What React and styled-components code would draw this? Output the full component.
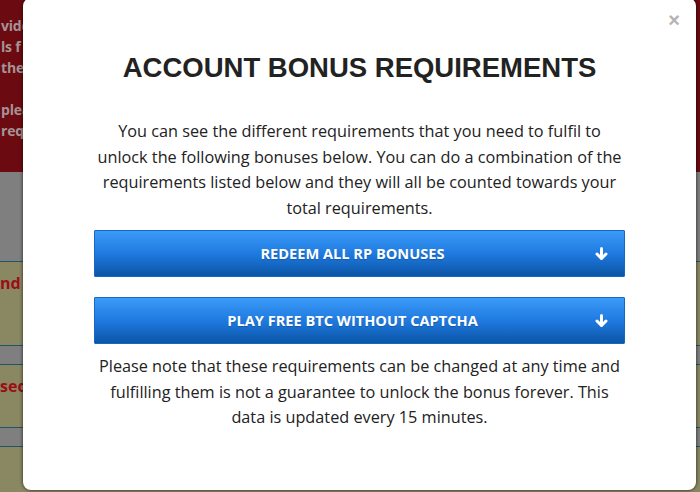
import React from "react";
import styled, { createGlobalStyle } from "styled-components";

const Global = createGlobalStyle`
  html, body { margin: 0; padding: 0; }
  body { width: 700px; height: 492px; overflow: hidden; background: #7f7f7f; font-family: "Open Sans", sans-serif; }
`;

const Page = styled.div`
  position: relative;
  width: 700px;
  height: 492px;
  overflow: hidden;
  display: flex;
  flex-direction: column;
`;

const Notice = styled.div`
  flex: 0 0 172px;
  background: #6b0a10;
  padding-top: 15px;
  box-sizing: border-box;
  display: flex;
  flex-direction: column;
  font-weight: 700;
  font-size: 14px;
  line-height: 21px;
  letter-spacing: -0.2px;
  color: #a69395;
`;

const NoticeLine = styled.div`
  height: 21px;
  padding-left: 1px;
  white-space: nowrap;
`;

const Spacer = styled.div`
  flex: 0 0 ${(p) => p.$h}px;
  box-sizing: border-box;
  background: #7f7f7f;
  border-bottom: 1px solid #1f5566;
`;

const Row = styled.div`
  flex: 0 0 ${(p) => p.$h}px;
  background: #8a8862;
  border-bottom: 1px solid #1f5566;
  box-sizing: border-box;
  padding-top: 10px;
  font-weight: 700;
  font-size: 16px;
  line-height: 22px;
  color: #9c0d16;
  white-space: nowrap;
`;

const Modal = styled.div`
  position: absolute;
  left: 23px;
  top: -2px;
  width: 673px;
  height: 492px;
  background: #ffffff;
  border-radius: 8px;
  box-shadow: 0 0 3px 1px rgba(0, 0, 0, 0.45);
  box-sizing: border-box;
  padding: 0 71px;
  display: flex;
  flex-direction: column;
  align-items: stretch;
  color: #222;
`;

const Close = styled.div`
  position: absolute;
  right: 16px;
  top: 12px;
  font-family: "Liberation Sans", Arial, sans-serif;
  font-weight: 700;
  font-size: 20px;
  line-height: 20px;
  color: #b3b3b3;
`;

const Title = styled.h1`
  margin: 54px -20px 0;
  text-align: center;
  font-family: "Liberation Sans", Arial, sans-serif;
  font-weight: 700;
  font-size: 27.5px;
  line-height: 31px;
  color: #222;
  white-space: nowrap;
`;

const Para = styled.p`
  margin: ${(p) => p.$mt}px 0 0;
  text-align: center;
  font-family: "Open Sans", sans-serif;
  font-size: 16.25px;
  line-height: 25.7px;
  color: #222;
`;

const Button = styled.button`
  position: relative;
  margin-top: ${(p) => p.$mt}px;
  height: 47px;
  width: 100%;
  border: 1px solid #1568c7;
  border-radius: 1px;
  background: linear-gradient(to bottom, #3b9bf8 0%, #1f7ae0 50%, #0b55a6 100%);
  color: #fff;
  font-family: "Open Sans", sans-serif;
  font-weight: 700;
  font-size: 14.6px;
  padding: 0 14px 0 0;
  display: flex;
  align-items: center;
  justify-content: center;
  cursor: pointer;
  text-shadow: 0 1px 1px rgba(0, 0, 0, 0.2);
`;

const Arrow = styled.svg`
  position: absolute;
  right: 16px;
  top: 16px;
  width: 13px;
  height: 14px;
`;

const ArrowDown = () => (
  <Arrow viewBox="0 0 13 14">
    <path d="M6.5 1.5 V11" stroke="#fff" strokeWidth="3" strokeLinecap="round" fill="none" />
    <path d="M2 7 L6.5 11.5 L11 7" stroke="#fff" strokeWidth="3" strokeLinecap="round" strokeLinejoin="round" fill="none" />
  </Arrow>
);

export default function App() {
  return (
    <>
      <Global />
      <Page>
        <Notice>
          <NoticeLine>vide</NoticeLine>
          <NoticeLine>ls f</NoticeLine>
          <NoticeLine>the</NoticeLine>
          <NoticeLine></NoticeLine>
          <NoticeLine>plea</NoticeLine>
          <NoticeLine>req</NoticeLine>
        </Notice>
        <Spacer $h={90} />
        <Row $h={84}>nd</Row>
        <Spacer $h={19} />
        <Row $h={63}>sed</Row>
        <Spacer $h={19} />
        <Row $h={60} />
        <Modal>
          <Close>×</Close>
          <Title>ACCOUNT BONUS REQUIREMENTS</Title>
          <Para $mt={36}>
            You can see the different requirements that you need to fulfil to unlock the following bonuses below. You
            can do a combination of the requirements listed below and they will all be counted towards your total
            requirements.
          </Para>
          <Button $mt={8}>
            REDEEM ALL RP BONUSES
            <ArrowDown />
          </Button>
          <Button $mt={20}>
            PLAY FREE BTC WITHOUT CAPTCHA
            <ArrowDown />
          </Button>
          <Para $mt={10}>
            Please note that these requirements can be changed at any time and fulfilling them is not a guarantee to
            unlock the bonus forever. This data is updated every 15 minutes.
          </Para>
        </Modal>
      </Page>
    </>
  );
}
